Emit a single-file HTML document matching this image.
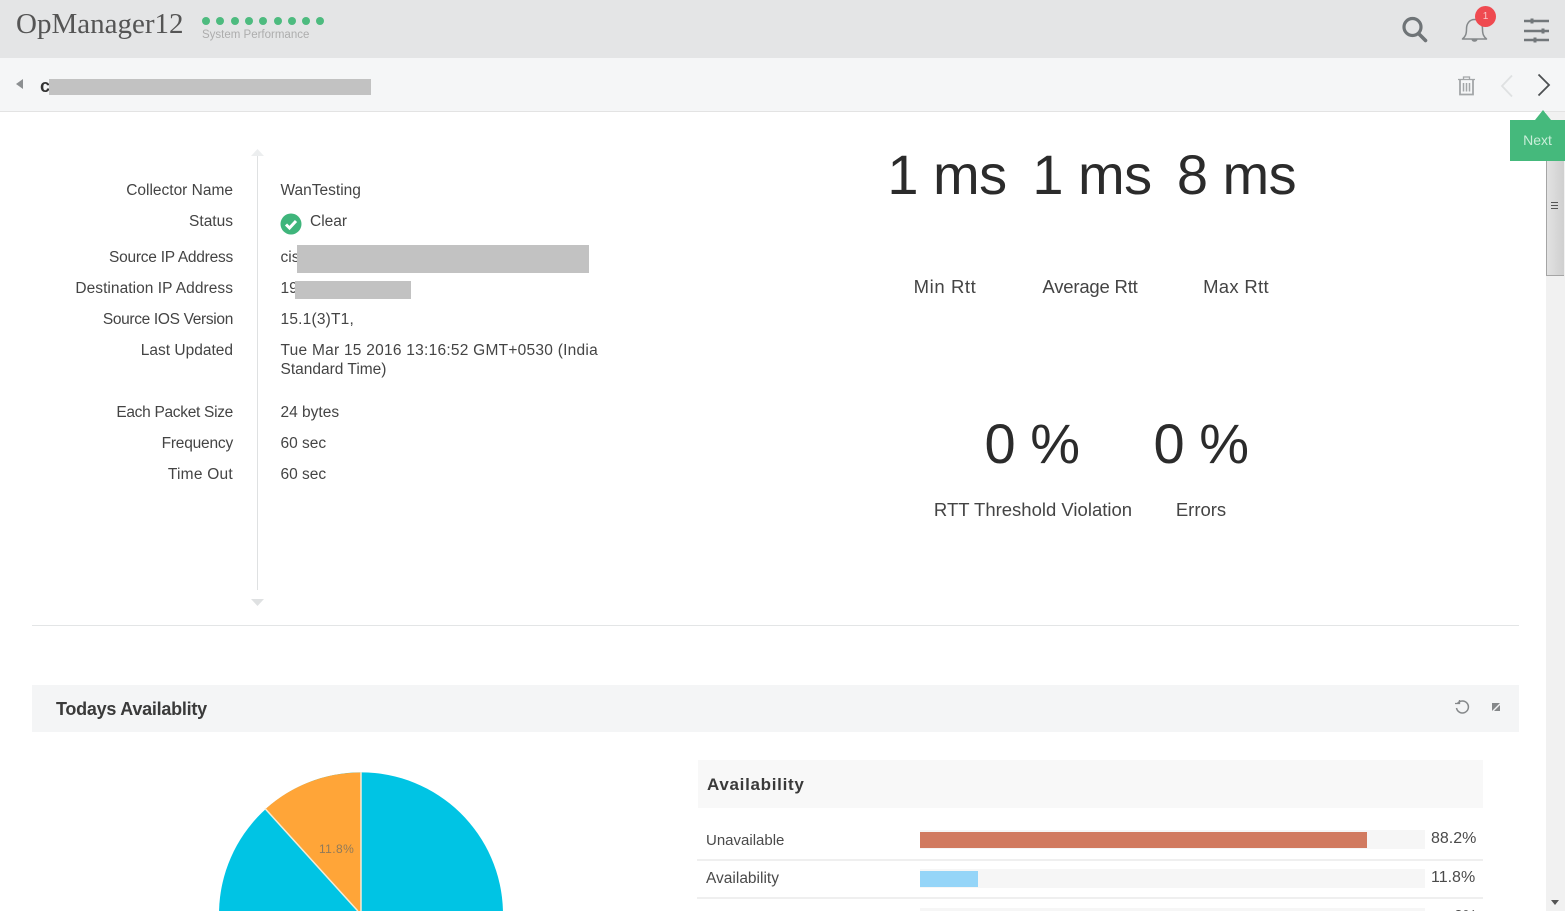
<!DOCTYPE html>
<html>
<head>
<meta charset="utf-8">
<title>OpManager12</title>
<style>
html,body{margin:0;padding:0;background:#fff;width:1565px;height:911px;overflow:hidden;}
body{font-family:"Liberation Sans",sans-serif;color:#3d3d3d;}
div,span{position:absolute;white-space:nowrap;}
#page{left:0;top:0;width:1565px;height:911px;overflow:hidden;background:#fff;}
.k{left:0;width:233px;text-align:right;font-size:15.5px;line-height:20px;color:#444;}
.v{left:280.5px;font-size:15.5px;line-height:20px;color:#444;}
.big{font-size:56px;line-height:64px;color:#2b2b2b;text-align:center;letter-spacing:-.5px;}
.lab{font-size:18.5px;line-height:24px;color:#444;text-align:center;}
.mask{background:#c2c2c2;}
svg{position:absolute;overflow:hidden;}
.dot{width:8px;height:8px;border-radius:50%;background:#4dbb7f;top:17px;}
</style>
</head>
<body>
<div id="page">
<!-- Top bar -->
<div style="left:0;top:0;width:1565px;height:58px;background:#e4e5e6;"></div>
<div style="left:16px;top:6px;font-family:'Liberation Serif',serif;font-size:29px;line-height:36px;color:#555;">OpManager12</div>
<div class="dot" style="left:202px"></div><div class="dot" style="left:216px"></div><div class="dot" style="left:231px"></div><div class="dot" style="left:245px"></div><div class="dot" style="left:259px"></div><div class="dot" style="left:274px"></div><div class="dot" style="left:288px"></div><div class="dot" style="left:302px"></div><div class="dot" style="left:316px"></div>
<div style="left:202px;top:28px;font-size:11.5px;line-height:14px;color:#adadad;">System Performance</div>

<svg style="left:1400px;top:14px" width="30" height="30" viewBox="0 0 30 30" fill="none"><circle cx="12.5" cy="13" r="8.5" stroke="#6f7477" stroke-width="3.2"/><path d="M18.5 19.5L25.5 26.5" stroke="#6f7477" stroke-width="3.6" stroke-linecap="round"/></svg>
<svg style="left:1460px;top:14px" width="30" height="30" viewBox="0 0 30 30" fill="none"><path d="M2.5 25C5.5 22.5 6.5 20 6.5 15C6.5 9 10 5.5 14.5 5.5C19 5.5 22.5 9 22.5 15C22.5 20 23.5 22.5 26.5 25Z" stroke="#85898b" stroke-width="1.5" stroke-linejoin="round"/><path d="M11.5 25.5C11.8 28.5 17.2 28.5 17.5 25.5Z" fill="#85898b"/></svg>
<div style="left:1475px;top:6px;width:21px;height:21px;border-radius:50%;background:#ef4a50;color:#f9c9ca;font-size:10px;line-height:21px;text-align:center;">1</div>
<svg style="left:1522px;top:16px" width="28" height="30" viewBox="0 0 28 30" fill="none" stroke="#72777a"><path d="M2 5H27M2 15H27M2 24H27" stroke-width="2.4"/><path d="M10 2.500V7.500M21 12.500V17.500M13 21.500V26.500" stroke-width="3"/></svg>

<!-- Sub bar -->
<div style="left:0;top:58px;width:1565px;height:53px;background:#f5f6f7;border-bottom:1px solid #e3e3e3;"></div>
<svg style="left:15px;top:78px" width="9" height="12"><path d="M1 6L8 1V11Z" fill="#8c8f91"/></svg>
<div style="left:40px;top:75px;font-size:18px;line-height:22px;font-weight:bold;color:#333;">c</div>
<div class="mask" style="left:49px;top:79px;width:322px;height:16px;"></div>
<svg style="left:1457px;top:76px" width="19" height="20" viewBox="0 0 19 20" fill="none" stroke="#a3a6a8"><path d="M1 3.500H18M6.500 3.500V1H12.500V3.500" stroke-width="1.300"/><path d="M3 4V18.500H16V4" stroke-width="1.800"/><path d="M6.500 7V15.500M9.500 7V15.500M12.500 7V15.500" stroke-width="1.500"/></svg>
<svg style="left:1500px;top:74px" width="14" height="24" fill="none"><path d="M12 1.500L2 12L12 22.500" stroke="#dfe1e2" stroke-width="1.800"/></svg>
<svg style="left:1537px;top:73px" width="14" height="24" fill="none"><path d="M1.500 1.500L12 12L1.500 22.500" stroke="#4c5052" stroke-width="1.800"/></svg>

<!-- Scrollbar -->
<div style="left:1546px;top:112px;width:19px;height:799px;background:#f1f1f1;"></div>
<div style="left:1546px;top:160px;width:18px;height:116px;background:linear-gradient(90deg,#e2e2e2,#cfcfcf);border:1px solid #a5a5a5;border-top:none;border-right:none;box-sizing:border-box;"></div>
<div style="left:1551px;top:202px;width:7px;height:8px;background:repeating-linear-gradient(#555 0 1px,transparent 1px 3px);"></div>
<svg style="left:1551px;top:900px" width="8" height="6"><path d="M0 0H8L4 5Z" fill="#555"/></svg>

<!-- Next tooltip -->
<svg style="left:1535px;top:110px" width="16" height="10"><path d="M0 10L8 0L16 10Z" fill="#45b97c"/></svg>
<div style="left:1510px;top:120px;width:55px;height:41px;background:#45b97c;color:#c9eed9;font-size:14px;line-height:41px;text-align:center;">Next</div>

<!-- Detail list -->
<div style="left:257px;top:156px;width:1px;height:434px;background:#dfe1e2;"></div>
<svg style="left:251px;top:149px" width="13" height="7"><path d="M0 7L6.500 0L13 7Z" fill="#eceeef"/></svg>
<svg style="left:251px;top:599px" width="13" height="7"><path d="M0 0L6.500 7L13 0Z" fill="#dfe1e2"/></svg>

<div class="k" style="top:181px">Collector Name</div>
<div class="k" style="top:212px">Status</div>
<div class="k" style="top:248px;letter-spacing:-.24px">Source IP Address</div>
<div class="k" style="top:279px;letter-spacing:.05px">Destination IP Address</div>
<div class="k" style="top:310px;letter-spacing:-.33px">Source IOS Version</div>
<div class="k" style="top:341px">Last Updated</div>
<div class="k" style="top:403px;letter-spacing:-.3px">Each Packet Size</div>
<div class="k" style="top:434px;letter-spacing:-.2px">Frequency</div>
<div class="k" style="top:465px;letter-spacing:.25px">Time Out</div>

<div class="v" style="top:181px">WanTesting</div>
<svg style="left:280px;top:213px" width="22" height="22" viewBox="0 0 22 22"><circle cx="11" cy="11" r="10.500" fill="#3fb57b"/><path d="M6 11.500L9.500 15L16 8" fill="none" stroke="#fff" stroke-width="3"/></svg>
<div class="v" style="left:310px;top:212px;font-size:15.5px">Clear</div>
<div class="v" style="top:248px">cis</div>
<div class="mask" style="left:297px;top:245px;width:292px;height:28px;"></div>
<div class="v" style="top:279px">19</div>
<div class="mask" style="left:295px;top:281px;width:116px;height:18px;"></div>
<div class="v" style="top:310px;letter-spacing:.2px">15.1(3)T1,</div>
<div class="v" style="top:341px;letter-spacing:.25px">Tue Mar 15 2016 13:16:52 GMT+0530 (India</div>
<div class="v" style="top:360px">Standard Time)</div>
<div class="v" style="top:403px">24 bytes</div>
<div class="v" style="top:434px">60 sec</div>
<div class="v" style="top:465px">60 sec</div>

<!-- Metrics -->
<div class="big" style="left:867px;width:160px;top:143px">1 ms</div>
<div class="big" style="left:1012px;width:160px;top:143px">1 ms</div>
<div class="big" style="left:1156.5px;width:160px;top:143px">8 ms</div>
<div class="lab" style="left:885px;width:120px;top:275px;letter-spacing:.6px">Min Rtt</div>
<div class="lab" style="left:1030px;width:120px;top:275px;letter-spacing:-.2px">Average Rtt</div>
<div class="lab" style="left:1176px;width:120px;top:275px;letter-spacing:.3px">Max Rtt</div>
<div class="big" style="left:952px;width:160px;top:412px">0 %</div>
<div class="big" style="left:1121px;width:160px;top:412px">0 %</div>
<div class="lab" style="left:913px;width:240px;top:498px">RTT Threshold Violation</div>
<div class="lab" style="left:1141px;width:120px;top:498px">Errors</div>

<div style="left:32px;top:625px;width:1487px;height:1px;background:#e3e5e6;"></div>

<!-- Availability panel -->
<div style="left:32px;top:685px;width:1487px;height:47px;background:#f4f5f6;"></div>
<div style="left:56px;top:697px;font-size:18px;line-height:24px;font-weight:bold;color:#3a3a3a;letter-spacing:-.25px;">Todays Availablity</div>
<svg style="left:1454px;top:699px" width="17" height="17" viewBox="0 0 17 17" fill="none" stroke="#85888a" stroke-width="1.500"><path d="M3.500 4.500A6 6 0 1 1 2.500 9"/><path d="M1 4.500H5.500V1" stroke-width="1.300"/></svg>
<svg style="left:1491px;top:702px" width="10" height="10" viewBox="0 0 10 10"><path d="M1 1H9L1 9Z" fill="#85888a"/><path d="M9 3V9H3Z" fill="#85888a"/></svg>

<!-- Pie -->
<svg style="left:200px;top:740px" width="320" height="171" viewBox="0 0 320 171">
<path d="M19.04 171A142 142 0 0 1 302.96 171Z" fill="#00c4e4"/>
<path d="M161 171H157.83L65.5 69A142 142 0 0 1 161 32.500Z" fill="#ffa538"/>
<path d="M161 171V32M157.83 171L65 68.500" stroke="#f4ecd9" stroke-width="1.500" fill="none"/>
<text x="119" y="113" font-family="Liberation Sans" font-size="12" letter-spacing=".4" fill="#8f7a5a">11.8%</text>
</svg>

<!-- Availability table -->
<div style="left:698px;top:760px;width:785px;height:48px;background:#f8f8f8;"></div>
<div style="left:707px;top:774px;font-size:17px;line-height:22px;font-weight:bold;color:#3a3a3a;letter-spacing:.7px;">Availability</div>

<div style="left:706px;top:831px;font-size:15px;line-height:20px;color:#4a4a4a;">Unavailable</div>
<div style="left:920px;top:830px;width:505px;height:19px;background:#f6f6f6;"></div>
<div style="left:920px;top:832px;width:447px;height:16px;background:#d17a60;"></div>
<div style="left:1431px;top:829px;font-size:16px;line-height:20px;color:#4a4a4a;">88.2%</div>
<div style="left:697px;top:859px;width:786px;height:2px;background:#efefef;"></div>

<div style="left:706px;top:869px;font-size:15.5px;line-height:20px;color:#4a4a4a;">Availability</div>
<div style="left:920px;top:869px;width:505px;height:19px;background:#f6f6f6;"></div>
<div style="left:920px;top:871px;width:58px;height:16px;background:#95d5f8;"></div>
<div style="left:1431px;top:868px;font-size:16px;line-height:20px;color:#4a4a4a;">11.8%</div>
<div style="left:697px;top:897px;width:786px;height:2px;background:#efefef;"></div>

<div style="left:920px;top:908px;width:505px;height:3px;background:#f6f6f6;"></div>
<svg style="left:1450px;top:905px" width="40" height="6" viewBox="0 0 40 6"><text x="4" y="16" font-family="Liberation Sans" font-size="16" fill="#4a4a4a">0%</text></svg>
</div>
</body>
</html>
